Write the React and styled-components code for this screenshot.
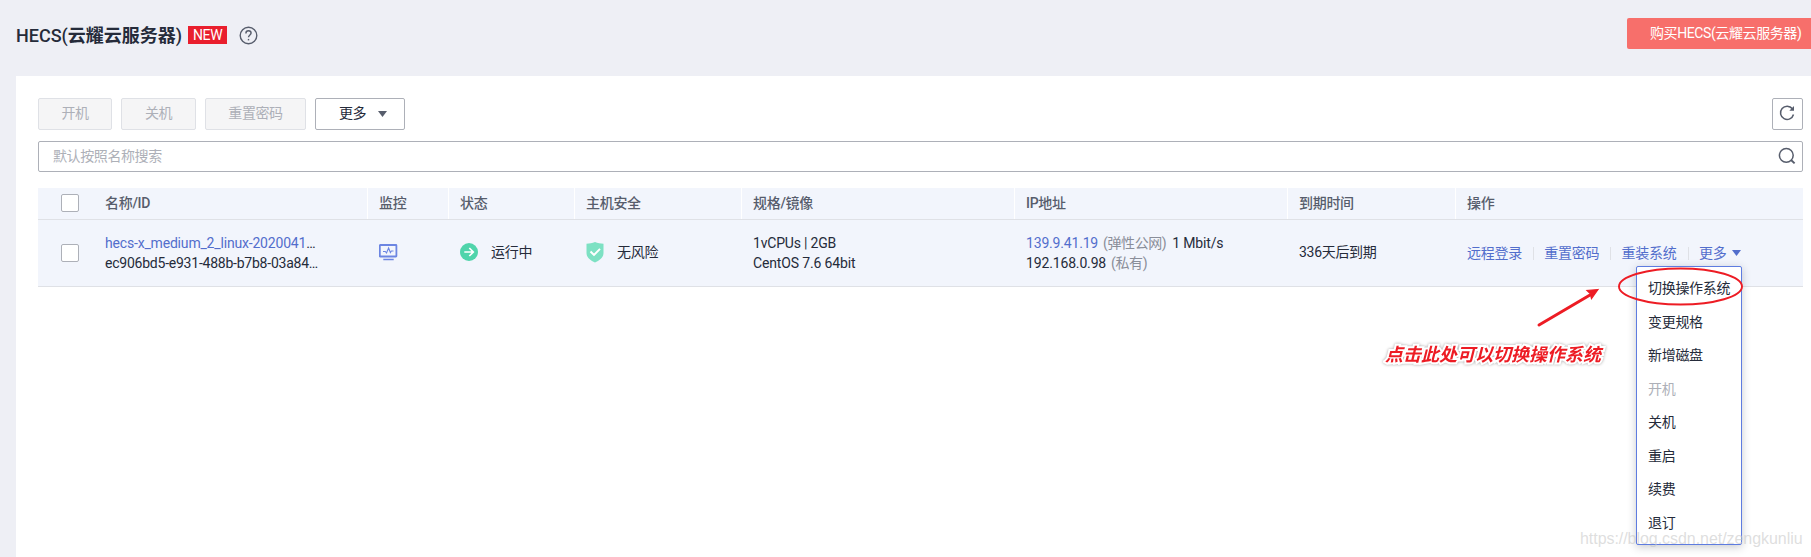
import React from "react";
import styled, { createGlobalStyle } from "styled-components";

const GlobalStyle = createGlobalStyle`
  * { box-sizing: border-box; }
  body {
    margin: 0;
    overflow: hidden;
    background: #eeeff5;
    color: #252b3a;
    font: 14px/20px Roboto, "Noto Sans CJK SC", sans-serif;
  }
`;

const Page = styled.div`
  position: relative;
  height: 557px;
  overflow: hidden;
`;

const Header = styled.header`
  display: flex;
  align-items: flex-start;
  justify-content: space-between;
  height: 76px;
  padding-left: 16px;
`;

const TitleGroup = styled.div`
  display: flex;
  align-items: center;
  height: 36px;
  margin-top: 17px;
`;

const Title = styled.h1`
  margin: 0;
  padding-top: 2px;
  font-size: 18px;
  font-weight: 500;
  line-height: 24px;
  white-space: nowrap;
`;

const TitleName = styled.span`
  font-weight: 700;
`;

const NewTag = styled.span`
  width: 39px;
  height: 18px;
  margin: 0 12px 0 6px;
  background: #e91e2d;
  color: #fff;
  font-size: 14px;
  line-height: 19px;
  letter-spacing: -0.4px;
  text-align: center;
`;

const BuyButton = styled.button`
  width: 184px;
  height: 31px;
  margin-top: 18px;
  padding: 0 0 2px 23px;
  border: 0;
  border-radius: 2px 0 0 2px;
  background: #f76f6b;
  color: #fff;
  font: inherit;
  text-align: left;
  white-space: nowrap;
  letter-spacing: -0.4px;
`;

const Panel = styled.main`
  height: 481px;
  margin-left: 16px;
  padding: 22px 8px 0 22px;
  background: #fff;
`;

const Toolbar = styled.div`
  display: flex;
  gap: 9px;
  height: 32px;
`;

const ToolButton = styled.button`
  display: flex;
  align-items: center;
  justify-content: center;
  gap: 12px;
  width: ${(p) => p.$width}px;
  height: 32px;
  padding: 0 0 2px;
  border: 1px solid ${(p) => (p.disabled ? "#dfe1e6" : "#adb0b8")};
  border-radius: 2px;
  background: ${(p) => (p.disabled ? "#f5f5f6" : "#fff")};
  color: ${(p) => (p.disabled ? "#adb0b8" : "#252b3a")};
  font: inherit;
  letter-spacing: -0.4px;
`;

const MoreButton = styled(ToolButton)`
  justify-content: flex-start;
  padding-left: 23px;
  svg { margin-top: 2px; }
`;

const RefreshButton = styled(ToolButton)`
  margin-left: auto;
  padding: 0 1px 2px 0;
`;

const SearchBox = styled.div`
  display: flex;
  align-items: center;
  justify-content: space-between;
  height: 31px;
  margin-top: 11px;
  padding: 0 6px 1px 14px;
  border: 1px solid #adb0b8;
  border-radius: 2px;
  color: #adb0b8;
  letter-spacing: -0.4px;
`;

const Table = styled.section`
  margin-top: 16px;
`;

const Row = styled.div`
  display: grid;
  grid-template-columns: 56px 274px 81px 126px 167px 273px 273px 168px 1fr;
  height: ${(p) => p.$height}px;
  border-bottom: 1px solid #dfe1e6;
  background: #f2f5fc;
`;

const HeadCell = styled.div`
  padding: 5px 0 0 11px;
  border-right: ${(p) => (p.$divided ? "1px solid #fff" : "0")};
  color: #575d6c;
  font-weight: 500;
  letter-spacing: -0.3px;
`;

const Cell = styled.div`
  display: flex;
  flex-direction: ${(p) => (p.$stack ? "column" : "row")};
  align-items: ${(p) => (p.$stack ? "flex-start" : "center")};
  justify-content: ${(p) => (p.$stack ? "center" : "flex-start")};
  gap: ${(p) => p.$gap || 0}px;
  padding: 0 0 ${(p) => (p.$stack ? 0 : 2)}px 11px;
  white-space: nowrap;
`;

const CheckCell = styled.div`
  display: flex;
  align-items: ${(p) => (p.$top ? "flex-start" : "center")};
  padding: ${(p) => (p.$top ? 6 : 0)}px 0 0 23px;
`;

const Checkbox = styled.span`
  width: 18px;
  height: 18px;
  border: 1px solid #adb0b8;
  border-radius: 2px;
  background: #fff;
`;

const Line = styled.div`
  letter-spacing: ${(p) => p.$track || 0}px;
`;

const Link = styled.a`
  color: #526ecc;
`;

const Muted = styled.span`
  margin: 0 6px 0 5px;
  color: #8a8e99;
  letter-spacing: -0.4px;
`;

const Cjk = styled.span`
  letter-spacing: -0.3px;
`;

const Actions = styled.div`
  display: flex;
  align-items: center;
  padding: 0 0 0 11px;
  white-space: nowrap;
  letter-spacing: -0.25px;
`;

const Action = styled(Link)`
  display: flex;
  align-items: center;
  gap: 6px;
  & + & {
    margin-left: 11px;
    padding-left: 11.3px;
    background: linear-gradient(#dfe1e6, #dfe1e6) left center / 1px 13px no-repeat;
  }
`;

const Menu = styled.ul`
  position: absolute;
  left: 1636px;
  top: 266px;
  width: 106px;
  height: 279px;
  margin: 0;
  padding: 5px 0 0;
  border: 1px solid #5e7ce0;
  border-radius: 2px;
  background: #fff;
  box-shadow: 0 2px 8px rgba(37, 43, 58, 0.25);
  list-style: none;
`;

const MenuItem = styled.li`
  height: 33.5px;
  padding-left: 11px;
  color: ${(p) => (p.$disabled ? "#adb0b8" : "#252b3a")};
  line-height: 32px;
  letter-spacing: -0.3px;
  white-space: nowrap;
`;

const Note = styled.div`
  position: absolute;
  left: 1385px;
  top: 342px;
  color: #ed1c24;
  font-size: 18px;
  font-weight: 700;
  font-style: italic;
  line-height: 26px;
  white-space: nowrap;
  filter: drop-shadow(0 0 1.5px rgba(0, 0, 0, 0.35));
  -webkit-text-stroke: 4px #fff;
  paint-order: stroke fill;
`;

const Markup = styled.svg`
  position: absolute;
  left: 1530px;
  top: 260px;
`;

const Watermark = styled.div`
  position: absolute;
  left: 1580px;
  top: 529px;
  color: rgba(200, 200, 200, 0.6);
  font: 16px/20px "Liberation Sans", sans-serif;
  letter-spacing: -0.05px;
  white-space: nowrap;
`;

const Caret = ({ color }) => (
  <svg width="9" height="6" viewBox="0 0 9 6">
    <path d="M0 0h9L4.5 6z" fill={color} />
  </svg>
);

const HelpIcon = () => (
  <svg width="19" height="19" viewBox="0 0 19 19" fill="none" stroke="#575d6c" strokeWidth="1.4">
    <circle cx="9.5" cy="9.5" r="8.3" />
    <path d="M6.9 7.4c0-1.6 1.1-2.6 2.6-2.6s2.6 1 2.6 2.3c0 1.8-2.6 2-2.6 4.2" />
    <path d="M9.5 12.9v1.5" />
  </svg>
);

const RefreshIcon = () => (
  <svg width="16" height="16" viewBox="0 0 16 16" fill="none" stroke="#575d6c" strokeWidth="1.5">
    <path d="M14.5 9.5A6.6 6.6 0 1 1 13.4 3.8" />
    <path d="M15 1v4.7h-4.7z" fill="#575d6c" stroke="none" />
  </svg>
);

const SearchIcon = () => (
  <svg width="18" height="18" viewBox="0 0 18 18" fill="none" stroke="#575d6c" strokeWidth="1.5">
    <circle cx="8.3" cy="8.3" r="6.9" />
    <path d="M12.8 12.8l3.8 3.6" strokeWidth="1.9" />
  </svg>
);

const MonitorIcon = () => (
  <svg width="19" height="17" viewBox="0 0 19 17" fill="none" stroke="#6c85e2">
    <rect x="0.8" y="1" width="16.6" height="11.5" rx="0.5" strokeWidth="1.8" />
    <path d="M4 7.5h2.3L7.5 9 9.6 4l1.8 4.5 1-1.5h2.1" strokeWidth="1.1" />
    <path d="M4.3 15.5h10.4" strokeWidth="1.5" />
  </svg>
);

const RunningIcon = () => (
  <svg width="18" height="18" viewBox="0 0 18 18" fill="none">
    <circle cx="9" cy="9" r="9" fill="#50d4ab" />
    <path d="M4.3 9h8.8M9.3 5l4 4-4 4" stroke="#fff" strokeWidth="1.7" />
  </svg>
);

const ShieldIcon = () => (
  <svg width="18" height="21" viewBox="0 0 18 21" fill="none">
    <path d="M9 0c2.6 1.2 5.5 1.7 8.5 1.7V11c0 4.5-4 7.5-8.5 9.5C4.500 18.500.5 15.500.5 11V1.7C3.5 1.7 6.4 1.2 9 0z" fill="#7de1c3" />
    <path d="M4.5 9.5l3.5 3.4 6-6" stroke="#fff" strokeWidth="2" />
  </svg>
);

const columns = ["名称/ID", "监控", "状态", "主机安全", "规格/镜像", "IP地址", "到期时间", "操作"];
const menuItems = ["切换操作系统", "变更规格", "新增磁盘", "开机", "关机", "重启", "续费", "退订"];

export default function App() {
  return (
    <Page>
      <GlobalStyle />
      <Header>
        <TitleGroup>
          <Title>HECS(<TitleName>云耀云服务器</TitleName>)</Title>
          <NewTag>NEW</NewTag>
          <HelpIcon />
        </TitleGroup>
        <BuyButton>购买HECS(云耀云服务器)</BuyButton>
      </Header>
      <Panel>
        <Toolbar>
          <ToolButton $width={74} disabled>开机</ToolButton>
          <ToolButton $width={75} disabled>关机</ToolButton>
          <ToolButton $width={101} disabled>重置密码</ToolButton>
          <MoreButton $width={90}>更多<Caret color="#575d6c" /></MoreButton>
          <RefreshButton $width={31}><RefreshIcon /></RefreshButton>
        </Toolbar>
        <SearchBox>默认按照名称搜索<SearchIcon /></SearchBox>
        <Table>
          <Row $height={32}>
            <CheckCell $top><Checkbox /></CheckCell>
            {columns.map((name, i) => (
              <HeadCell key={name} $divided={i < columns.length - 1}>{name}</HeadCell>
            ))}
          </Row>
          <Row $height={67}>
            <CheckCell><Checkbox /></CheckCell>
            <Cell $stack>
              <Line $track={-0.18}><Link>hecs-x_medium_2_linux-2020041</Link>…</Line>
              <Line $track={-0.23}>ec906bd5-e931-488b-b7b8-03a84…</Line>
            </Cell>
            <Cell><MonitorIcon /></Cell>
            <Cell $gap={13}><RunningIcon /><Cjk>运行中</Cjk></Cell>
            <Cell $gap={13}><ShieldIcon /><Cjk>无风险</Cjk></Cell>
            <Cell $stack>
              <Line $track={-0.2}>1vCPUs | 2GB</Line>
              <Line $track={-0.15}>CentOS 7.6 64bit</Line>
            </Cell>
            <Cell $stack>
              <Line $track={-0.18}><Link>139.9.41.19</Link><Muted>(弹性公网)</Muted>1 Mbit/s</Line>
              <Line $track={-0.15}>192.168.0.98<Muted>(私有)</Muted></Line>
            </Cell>
            <Cell><Cjk>336天后到期</Cjk></Cell>
            <Actions>
              <Action>远程登录</Action>
              <Action>重置密码</Action>
              <Action>重装系统</Action>
              <Action>更多<Caret color="#526ecc" /></Action>
            </Actions>
          </Row>
        </Table>
      </Panel>
      <Menu>
        {menuItems.map((name) => (
          <MenuItem key={name} $disabled={name === "开机"}>{name}</MenuItem>
        ))}
      </Menu>
      <Note>点击此处可以切换操作系统</Note>
      <Markup width="220" height="70" viewBox="0 0 220 70" fill="none" stroke="#ed1c24">
        <ellipse cx="150.500" cy="26.500" rx="61.500" ry="18" strokeWidth="1.900" />
        <path d="M9 65L60 35" strokeWidth="3" strokeLinecap="round" />
        <path d="M68 29.500l-11 1 3.200 3 1.300 5z" fill="#ed1c24" strokeWidth="1.200" />
      </Markup>
      <Watermark>https://blog.csdn.net/zengkunliu</Watermark>
    </Page>
  );
}
